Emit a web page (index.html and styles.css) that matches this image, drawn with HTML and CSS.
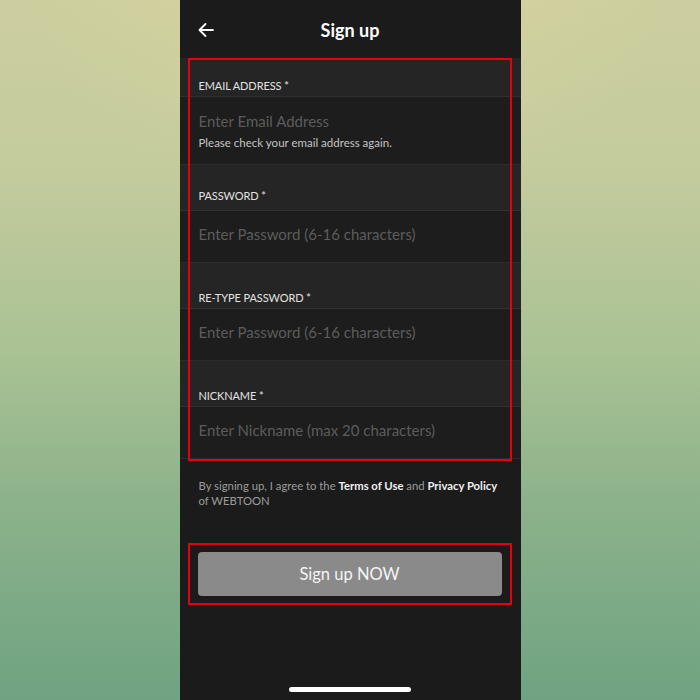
FILE: index.html
```html
<!DOCTYPE html>
<html>
<head>
    <meta name="viewport" content="width=device-width, initial-scale=1.0">
    <link rel="stylesheet" href="styles.css">
</head>
<body>
    <div class="phone">
        <div class="topbar">
            <span class="back">
                <svg width="16" height="14" viewBox="0 0 16 14"><path d="M15 7H1.5M7.5 1L1.5 7l6 6" fill="none" stroke="#fff" stroke-width="1.8" stroke-linecap="round" stroke-linejoin="round"/></svg>
            </span>
            <h1>Sign up</h1>
            <span class="spacer"></span>
        </div>

        <div class="fields">
            <div class="label first">EMAIL ADDRESS *</div>
            <div class="field email">
                <input type="text" placeholder="Enter Email Address">
                <p class="error">Please check your email address again.</p>
            </div>
            <div class="label pw">PASSWORD *</div>
            <div class="field">
                <input type="password" placeholder="Enter Password (6-16 characters)">
            </div>
            <div class="label">RE-TYPE PASSWORD *</div>
            <div class="field">
                <input type="password" placeholder="Enter Password (6-16 characters)">
            </div>
            <div class="label">NICKNAME *</div>
            <div class="field">
                <input type="text" placeholder="Enter Nickname (max 20 characters)">
            </div>
        </div>

        <p class="terms">By signing up, I agree to the <b>Terms of Use</b> and <b>Privacy Policy</b> of WEBTOON</p>

        <div class="buttonBox">
            <button id="signupBtn">Sign up NOW</button>
        </div>

        <div class="homeBar"></div>
    </div>
</body>
</html>
```

FILE: styles.css
```css
html, body {
    margin: 0;
    height: 100%;
}

body {
    background:
        radial-gradient(ellipse 45% 30% at 50% 0%, rgba(218, 212, 160, 0.7), rgba(218, 212, 160, 0)),
        linear-gradient(to bottom, #cdce9f 0%, #c3cb9c 25%, #aac294 50%, #8cb28a 72%, #6fa382 100%);
    font-family: 'Lato', 'Noto Sans', sans-serif;
    overflow: hidden;
}

.phone {
    width: 341px;
    height: 700px;
    margin: 0 auto;
    background-color: #1b1b1b;
    display: flex;
    flex-direction: column;
}

.topbar {
    height: 58px;
    display: flex;
    align-items: center;
    padding: 2px 18px 0;
    box-sizing: border-box;
}

.back, .spacer {
    width: 20px;
    display: flex;
    align-items: center;
}

.topbar h1 {
    flex: 1;
    margin: 0;
    text-align: center;
    color: #fff;
    font-size: 18px;
    font-weight: bold;
}

.fields {
    position: relative;
}

/* red annotation box over the form */
.fields::after {
    content: '';
    position: absolute;
    top: 0;
    left: 8px;
    right: 9px;
    bottom: -2px;
    border: 2px solid #e6000d;
}

.label {
    height: 46px;
    box-sizing: border-box;
    padding: 0 19px 4px;
    display: flex;
    align-items: flex-end;
    background-color: #252525;
    border-bottom: 1px solid #303030;
    color: #e2e2e2;
    font-size: 11px;
    letter-spacing: -0.1px;
}

.label.first {
    height: 39px;
}

.label.pw {
    padding-bottom: 8px;
}

.field {
    height: 52px;
    box-sizing: border-box;
    background-color: #1d1d1d;
    padding: 14px 19px 0;
    display: flex;
    flex-direction: column;
    border-bottom: 1px solid #2b2b2b;
}

.field.email {
    height: 68px;
    padding-top: 15px;
}

.field input {
    background: none;
    border: none;
    outline: none;
    padding: 0;
    font-family: inherit;
    font-size: 15px;
    color: #ddd;
    width: 100%;
}

.field input::placeholder {
    color: #5c5c5c;
}

.error {
    margin: 6px 0 0;
    font-size: 11.5px;
    color: #c4c4c4;
}

.terms {
    margin: 19px 0 0;
    padding: 0 19px;
    font-size: 11.3px;
    line-height: 15px;
    color: #9b9b9b;
}

.terms b {
    color: #f0f0f0;
    font-weight: bold;
}

.buttonBox {
    margin: 35px 9px 0 8px;
    border: 2px solid #e6000d;
    padding: 7px 8px;
}

#signupBtn {
    width: 100%;
    height: 44px;
    display: block;
    border: none;
    border-radius: 4px;
    background-color: #8a8a8a;
    color: #f4f4f4;
    font-family: inherit;
    font-size: 16.5px;
}

.homeBar {
    margin: auto auto 8px;
    width: 122px;
    height: 5px;
    border-radius: 3px;
    background-color: #fff;
}
```
